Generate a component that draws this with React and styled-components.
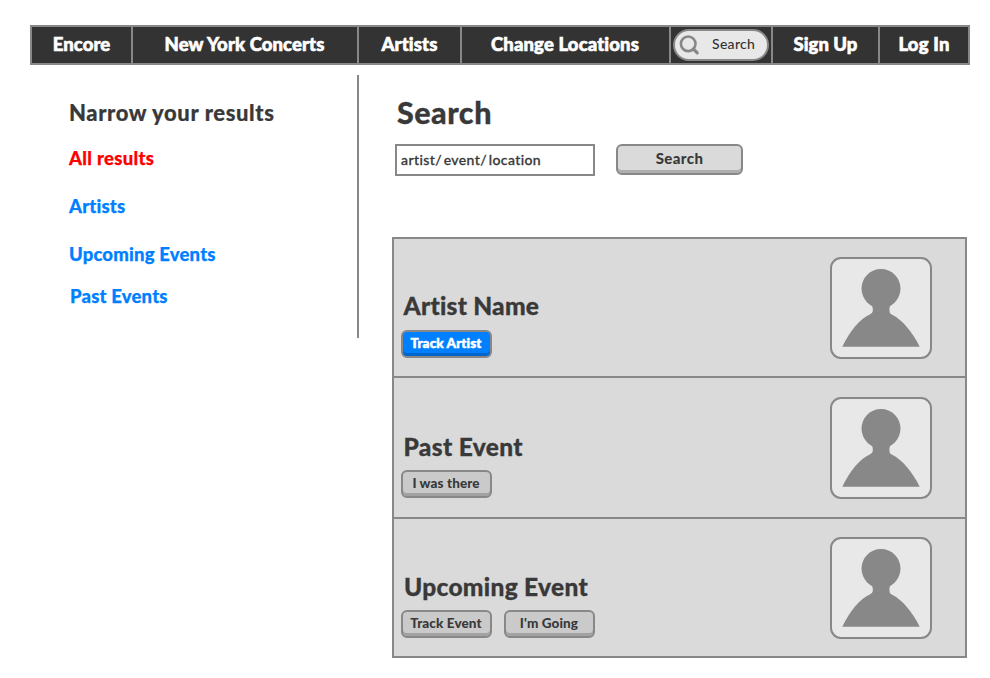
import React from "react";
import styled, { createGlobalStyle } from "styled-components";

const GlobalStyle = createGlobalStyle`
  * { box-sizing: border-box; }
  body {
    margin: 0;
    background: #fff;
    color: #393939;
    font-family: Lato, "Open Sans", sans-serif;
    font-variant-ligatures: none;
    -webkit-font-smoothing: antialiased;
  }
  h1, h2, h3 { margin: 0; }
`;

const Page = styled.div`
  width: 990px;
  height: 678px;
  padding: 25px 20px 0 30px;
  overflow: hidden;
`;

const NavBar = styled.nav`
  display: grid;
  grid-template-columns: 99px 224px 101px 207px 100px 105px 88px;
  column-gap: 2px;
  width: 940px;
  height: 40px;
  padding: 2px;
  background: #888;
`;

const NavItem = styled.a`
  display: flex;
  align-items: center;
  justify-content: center;
  padding: 0 ${(p) => p.$right || 0}px 2px 0;
  background: #333;
  color: #fff;
  font-size: 18.5px;
  font-weight: 900;
  line-height: 22px;
  letter-spacing: ${(p) => p.$spacing}px;
  -webkit-text-stroke: 0.6px #fff;
  white-space: nowrap;
`;

const NavSearchCell = styled.div`
  display: flex;
  align-items: center;
  padding: 0 0 0 2px;
  background: #333;
`;

const SearchPill = styled.div`
  display: flex;
  align-items: center;
  width: 96px;
  height: 32px;
  padding-left: 4px;
  border: 2px solid #888;
  border-radius: 16px;
  background: #e8e8e8;
`;

const PillText = styled.span`
  margin-left: 11px;
  padding-bottom: 3px;
  color: #333;
  font-size: 14px;
  font-weight: 500;
  line-height: 17px;
  letter-spacing: 0.3px;
`;

const Columns = styled.div`
  display: flex;
`;

const Sidebar = styled.aside`
  width: 329px;
  height: 263px;
  margin-top: 10px;
  padding: 25px 0 0 39px;
  border-right: 2px solid #888;
`;

const SidebarTitle = styled.h2`
  font-size: 22px;
  font-weight: 900;
  line-height: 26px;
  letter-spacing: 0.6px;
  -webkit-text-stroke: 0.2px currentColor;
`;

const FilterLink = styled.a`
  display: block;
  margin-top: ${(p) => p.$gap}px;
  padding-left: ${(p) => p.$indent || 0}px;
  color: ${(p) => (p.$active ? "#ff0000" : "#0080ff")};
  font-size: 18.5px;
  font-weight: 900;
  line-height: 22px;
  letter-spacing: ${(p) => p.$spacing || 0.18}px;
  -webkit-text-stroke: 0.25px currentColor;
`;

const Main = styled.main`
  width: 575px;
  margin-left: 33px;
  padding-top: 29px;
`;

const Title = styled.h1`
  padding-left: 5px;
  font-size: 30.5px;
  font-weight: 900;
  line-height: 36px;
  letter-spacing: 0.5px;
  -webkit-text-stroke: 0.3px currentColor;
`;

const SearchRow = styled.div`
  display: flex;
  align-items: flex-start;
  gap: 21px;
  margin-top: 14px;
  padding-left: 3px;
`;

const Field = styled.div`
  width: 200px;
  height: 32px;
  padding: 5px 4px 0;
  border: 2px solid #888;
  background: #fff;
  font-size: 14px;
  font-weight: 500;
  line-height: 17px;
  letter-spacing: 0.4px;
  word-spacing: -2.2px;
  -webkit-text-stroke: 0.3px currentColor;
`;

const Button = styled.button`
  display: flex;
  align-items: center;
  justify-content: center;
  width: 91px;
  height: 28px;
  padding: 0 1px 2px 0;
  border: 2px solid #888;
  border-radius: 6px;
  background: ${(p) => (p.$primary ? "#0080ff" : "#cacaca")};
  box-shadow: inset 0 ${(p) => (p.$primary ? "-3px #0066cc" : "-3px #a2a2a2")};
  color: ${(p) => (p.$primary ? "#fff" : "#393939")};
  font-family: inherit;
  font-variant-ligatures: none;
  font-size: 13.5px;
  font-weight: 900;
  line-height: 16px;
  letter-spacing: 0.1px;
  -webkit-text-stroke: ${(p) => (p.$primary ? 0.5 : 0)}px currentColor;
  white-space: nowrap;
`;

const SearchButton = styled(Button)`
  width: 127px;
  height: 31px;
  padding: 0 0 3px;
  background: #dadada;
  box-shadow: inset 0 -3px #aeaeae;
  font-size: 15px;
  letter-spacing: 0.4px;
`;

const Results = styled.section`
  display: grid;
  grid-template-rows: 137px 139px 137px;
  row-gap: 2px;
  width: 575px;
  margin-top: 61px;
  padding: 2px;
  background: #888;
`;

const ResultRow = styled.article`
  display: flex;
  align-items: center;
  justify-content: space-between;
  padding: 0 33px 0 7px;
  background: #dadada;
`;

const ResultBody = styled.div`
  display: flex;
  flex-direction: column;
  justify-content: flex-end;
  height: 102px;
  padding-bottom: 1px;
`;

const ResultName = styled.h3`
  padding-left: ${(p) => p.$indent}px;
  margin-bottom: ${(p) => p.$gap}px;
  font-size: 24.5px;
  font-weight: 900;
  line-height: 30px;
  letter-spacing: ${(p) => p.$spacing}px;
  -webkit-text-stroke: 0.3px currentColor;
`;

const Actions = styled.div`
  display: flex;
  gap: 12px;
`;

const Avatar = styled.div`
  width: 102px;
  height: 102px;
  border: 2px solid #888;
  border-radius: 11px;
  background: #e8e8e8;

  svg { display: block; }
`;

const navLinks = [
  { label: "Encore", spacing: 0.1, right: 0 },
  { label: "New York Concerts", spacing: 0.1, right: 1 },
  { label: "Artists", spacing: 0.15, right: 0 },
  { label: "Change Locations", spacing: 0.13, right: 1 },
];

const accountLinks = [
  { label: "Sign Up", spacing: 0.02, right: 0 },
  { label: "Log In", spacing: 0.2, right: 0 },
];

const filters = [
  { label: "All results", gap: 21, active: true, spacing: 0.3 },
  { label: "Artists", gap: 26 },
  { label: "Upcoming Events", gap: 26 },
  { label: "Past Events", gap: 20, indent: 1 },
];

const results = [
  { name: "Artist Name", indent: 2.5, gap: 9, spacing: 0.25, actions: [{ label: "Track Artist", primary: true }] },
  { name: "Past Event", indent: 2.5, gap: 8, spacing: 0.35, actions: [{ label: "I was there" }] },
  { name: "Upcoming Event", indent: 3, gap: 8, spacing: 0.3, actions: [{ label: "Track Event" }, { label: "I'm Going" }] },
];

function Magnifier() {
  return (
    <svg width="22" height="22" viewBox="0 0 22 22" fill="none" stroke="#888">
      <circle cx="9.2" cy="9.8" r="7.3" strokeWidth="2.6" />
      <path d="M14.4 15L18.2 18.8" strokeWidth="3.2" strokeLinecap="round" />
    </svg>
  );
}

function Person() {
  return (
    <svg width="98" height="98" viewBox="0 0 98 98" fill="#888">
      <circle cx="49" cy="29.6" r="19.5" />
      <path d="M36.5 43.8C40.6 46.5 41.2 48.5 40.7 52.5Q40.4 54 38.6 54.9C27.5 59.8 17.5 72.5 10.3 87.7H87.7C80 72.5 70.5 61 59.8 55.6C58 54.7 57.6 53.6 57.5 52C57.3 48 57.8 46.5 61.5 43.8Z" />
    </svg>
  );
}

export default function App() {
  return (
    <>
      <GlobalStyle />
      <Page>
        <NavBar>
          {navLinks.map((l) => (
            <NavItem key={l.label} $spacing={l.spacing} $right={l.right}>{l.label}</NavItem>
          ))}
          <NavSearchCell>
            <SearchPill>
              <Magnifier />
              <PillText>Search</PillText>
            </SearchPill>
          </NavSearchCell>
          {accountLinks.map((l) => (
            <NavItem key={l.label} $spacing={l.spacing} $right={l.right}>{l.label}</NavItem>
          ))}
        </NavBar>
        <Columns>
          <Sidebar>
            <SidebarTitle>Narrow your results</SidebarTitle>
            {filters.map((f) => (
              <FilterLink key={f.label} $gap={f.gap} $active={f.active} $indent={f.indent} $spacing={f.spacing}>
                {f.label}
              </FilterLink>
            ))}
          </Sidebar>
          <Main>
            <Title>Search</Title>
            <SearchRow>
              <Field>artist/ event/ location</Field>
              <SearchButton>Search</SearchButton>
            </SearchRow>
            <Results>
              {results.map((r) => (
                <ResultRow key={r.name}>
                  <ResultBody>
                    <ResultName $indent={r.indent} $gap={r.gap} $spacing={r.spacing}>{r.name}</ResultName>
                    <Actions>
                      {r.actions.map((a) => (
                        <Button key={a.label} $primary={a.primary}>{a.label}</Button>
                      ))}
                    </Actions>
                  </ResultBody>
                  <Avatar><Person /></Avatar>
                </ResultRow>
              ))}
            </Results>
          </Main>
        </Columns>
      </Page>
    </>
  );
}
